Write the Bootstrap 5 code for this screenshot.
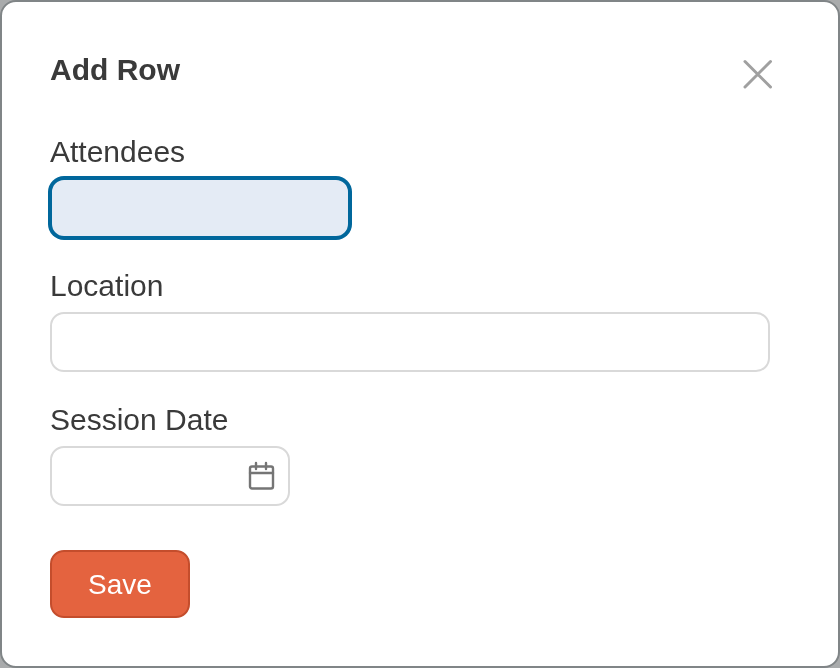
<!doctype html>
<html lang="en"><head><meta charset="utf-8"><title>Add Row</title>
<link rel="stylesheet" href="https://cdn.jsdelivr.net/npm/bootstrap@5.3.0/dist/css/bootstrap.min.css">
<style>
html,body{height:100%;}
body{background:#a9abac;font-family:"Liberation Sans",Arial,sans-serif;color:#3a3a3a;overflow:hidden;}
.dlg{width:840px;height:668px;background:#fff;border:2px solid #808587;border-radius:16px;padding:50px 48px 0 48px;will-change:transform;}
.dlg-title{font-size:30px;font-weight:700;line-height:36px;margin:0;color:#3a3a3a;}
.dlg-close{background:none;border:0;padding:0;width:32px;height:32px;margin:6px 16px 0 0;line-height:0;}
.dlg-head{height:80px;}
.fld{margin-bottom:28px;}
.fld-label{display:block;font-size:30px;line-height:40px;margin:0 0 6px;color:#3a3a3a;}
.fld-input{display:block;height:60px;border:2px solid #d9d9d9;border-radius:14px;background:#fff;font-size:28px;padding:0 16px;color:#333;outline:0;font-family:inherit;}
.w-short{width:300px;}.w-full{width:720px;}
.fld-active{background:#e4ebf5;border-color:#00679c;box-shadow:0 0 0 2px #00679c;}
.date-wrap{width:240px;}
.date-wrap .fld-input{width:100%;}
.date-ico{position:absolute;right:14px;top:15px;line-height:0;}
.save-btn{width:140px;height:68px;background:#e4633f;border:2px solid #c44d2c;border-radius:14px;color:#fff;font-size:28px;padding:2px 0 0;margin-top:16px;}
.save-btn:hover{background:#e4633f;border-color:#c44d2c;color:#fff;}
</style></head>
<body>
<div class="dlg">
 <div class="dlg-head d-flex justify-content-between align-items-start">
  <h1 class="dlg-title">Add Row</h1>
  <button class="dlg-close" type="button" aria-label="Close"><svg width="32" height="32" viewBox="0 0 32 32" fill="none" stroke="#a0a0a0" stroke-width="3" stroke-linecap="round"><path d="M3 3.500 28.500 29M28.500 3.500 3 29"/></svg></button>
 </div>
 <form>
  <div class="fld"><label class="fld-label" for="a">Attendees</label><input id="a" class="fld-input fld-active w-short" type="text"></div>
  <div class="fld"><label class="fld-label" for="l">Location</label><input id="l" class="fld-input w-full" type="text"></div>
  <div class="fld"><label class="fld-label" for="d">Session Date</label>
   <div class="date-wrap position-relative"><input id="d" class="fld-input" type="text">
    <span class="date-ico"><svg width="30" height="30" viewBox="0 0 30 30" fill="none" stroke="#757575" stroke-width="2.400" stroke-linecap="round" stroke-linejoin="round"><rect x="4" y="5.500" width="23" height="22" rx="2"/><path d="M4 12H27M10 2V8M20 2V8"/></svg></span>
   </div></div>
  <button class="btn save-btn" type="button">Save</button>
 </form>
</div>
<script src="https://cdn.jsdelivr.net/npm/bootstrap@5.3.0/dist/js/bootstrap.bundle.min.js"></script>
</body></html>
